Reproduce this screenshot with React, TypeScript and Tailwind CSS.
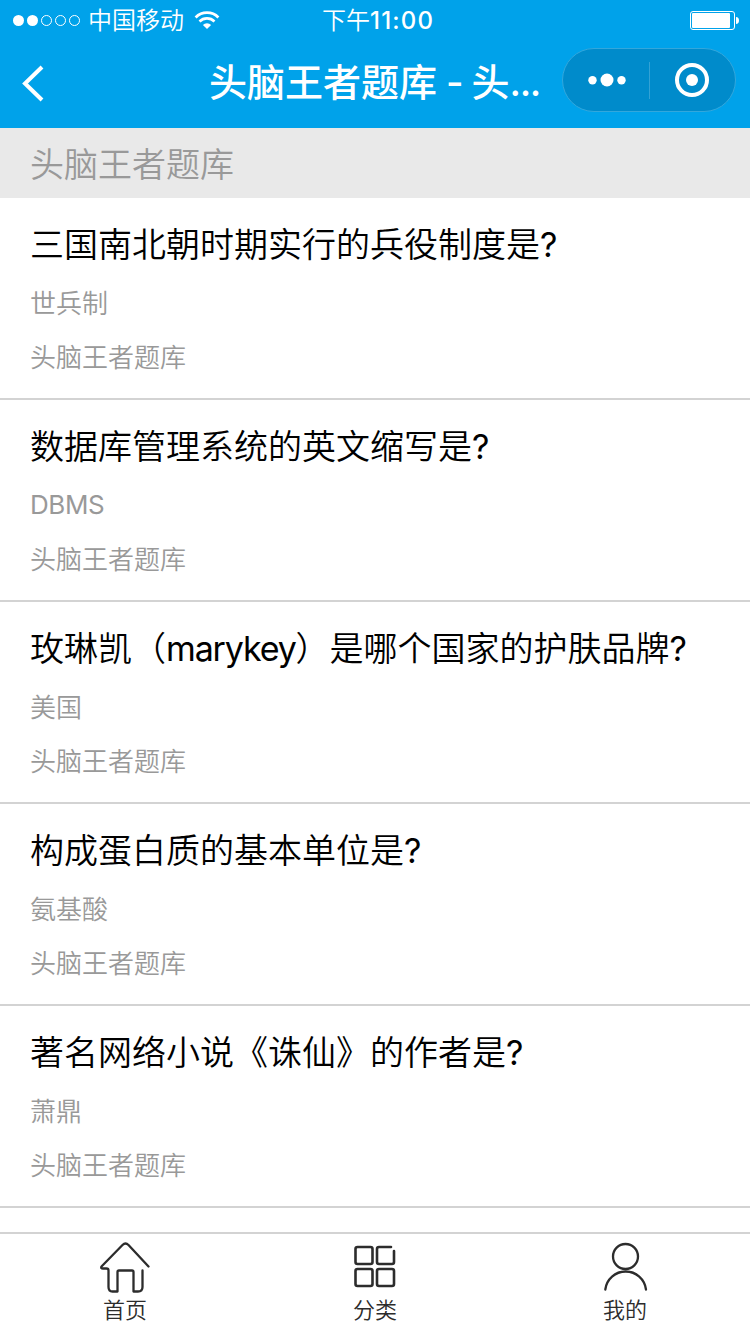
import type { ReactNode } from "react";

type Question = {
  title: string;
  answer: string;
  source: string;
};

const questions: Question[] = [
  { title: "三国南北朝时期实行的兵役制度是?", answer: "世兵制", source: "头脑王者题库" },
  { title: "数据库管理系统的英文缩写是?", answer: "DBMS", source: "头脑王者题库" },
  { title: "玫琳凯（marykey）是哪个国家的护肤品牌?", answer: "美国", source: "头脑王者题库" },
  { title: "构成蛋白质的基本单位是?", answer: "氨基酸", source: "头脑王者题库" },
  { title: "著名网络小说《诛仙》的作者是?", answer: "萧鼎", source: "头脑王者题库" },
];

function StatusBar() {
  return (
    <div className="grid h-10 grid-cols-3 items-center text-2xl leading-[38px]">
      <div className="flex items-center pl-[13px]">
        <svg width="68" height="12" viewBox="0 0 68 12" fill="none">
          <circle cx="5.5" cy="6.5" r="5.5" fill="white" />
          <circle cx="19.5" cy="6.5" r="5.5" fill="white" />
          <circle cx="33.5" cy="6.5" r="5" stroke="white" />
          <circle cx="47.5" cy="6.5" r="5" stroke="white" />
          <circle cx="61.5" cy="6.5" r="5" stroke="white" />
        </svg>
        <span className="ml-[7px] pt-0.5 font-[350]">中国移动</span>
        <svg className="ml-2.5" width="26" height="20" viewBox="0 0 26 20" fill="none">
          <path d="M1.6 7.4a16.2 16.2 0 0 1 22.8 0" stroke="white" strokeWidth="2.8" />
          <path d="M5.5 11.5a10.6 10.6 0 0 1 15 0" stroke="white" strokeWidth="2.6" />
          <path d="M8.9 15a5.8 5.8 0 0 1 8.2 0L13 19z" fill="white" />
        </svg>
      </div>
      <div className="pt-0.5 pl-[72px] whitespace-nowrap">
        <span className="font-[350]">下午</span>
        <span className="font-medium tracking-[1.2px]">11:00</span>
      </div>
      <div className="flex justify-end pr-[11px]">
        <svg width="49" height="20" viewBox="0 0 49 20" fill="none">
          <rect x="0.5" y="1.5" width="44" height="18" rx="2.5" stroke="white" />
          <rect x="2" y="3" width="38" height="15" rx="1" fill="white" />
          <path d="M46 7c2 0 3 1.5 3 3.5S48 14 46 14z" fill="white" />
        </svg>
      </div>
    </div>
  );
}

function NavBar() {
  return (
    <div className="flex h-[88px] items-start">
      <button className="w-[209px] pt-[25px] pl-[22px]">
        <svg width="22" height="37" viewBox="0 0 22 37" fill="none">
          <path d="M20 2L3 18.5L20 35" stroke="white" strokeWidth="4" />
        </svg>
      </button>
      <h1 className="w-[353px] text-[38px] leading-[84px] font-medium whitespace-nowrap">
        头脑王者题库<span className="tracking-[-1.1px]"> - </span>头
        <span className="tracking-[-1.4px]">...</span>
      </h1>
      <div className="mt-2 flex h-16 w-[174px] items-center rounded-full border border-[#33a7dc] bg-[#008bcb]">
        <button className="flex h-full w-[86px] items-center justify-center pl-0.5">
          <svg width="38" height="14" viewBox="0 0 38 14" fill="white">
            <circle cx="4.5" cy="7.3" r="4.2" />
            <circle cx="19" cy="7" r="6.5" />
            <circle cx="33.5" cy="7.3" r="4.2" />
          </svg>
        </button>
        <div className="h-[37px] w-px bg-[#33a2d5]" />
        <button className="flex h-full flex-1 items-center justify-center pr-0.5">
          <svg width="36" height="36" viewBox="0 0 36 36" fill="none">
            <circle cx="18" cy="18" r="15" stroke="white" strokeWidth="4" />
            <circle cx="18" cy="18" r="6" fill="white" />
          </svg>
        </button>
      </div>
    </div>
  );
}

// latin words inside a chinese title are set a bit tighter
function TitleText({ text }: { text: string }) {
  return text.split(/([a-z?]+)/).map((part, i) =>
    i % 2 ? (
      <span key={i} className="font-normal tracking-[-1.15px]">
        {part}
      </span>
    ) : (
      part
    )
  );
}

function QuestionItem({ title, answer, source }: Question) {
  const latin = /^[A-Z]+$/.test(answer);

  return (
    <li className="h-[202px] border-b-2 border-[#d3d3d3] px-[30px] pt-[23px]">
      <h2 className="text-[34px] leading-[48px] font-[350] whitespace-nowrap text-black">
        <TitleText text={title} />
      </h2>
      <p
        className={`mt-2 h-[54px] text-[26px] text-[#999] ${
          latin ? "leading-[52px] font-normal tracking-[-0.4px]" : "leading-[54px] font-[350]"
        }`}
      >
        {answer}
      </p>
      <p className="text-[26px] leading-[54px] font-[350] text-[#999]">{source}</p>
    </li>
  );
}

function Tab({ label, children }: { label: string; children: ReactNode }) {
  return (
    <button className="flex flex-1 flex-col items-center pt-[7px]">
      <svg
        width="52"
        height="52"
        viewBox="0 0 52 52"
        fill="none"
        stroke="#2c2c2c"
        strokeWidth="2.3"
        strokeLinecap="round"
        strokeLinejoin="round"
      >
        {children}
      </svg>
      <span className="mt-px text-[22px] leading-8 font-[350] text-[#2c2c2c]">{label}</span>
    </button>
  );
}

export default function App() {
  return (
    <main className="flex h-[1334px] w-[750px] flex-col overflow-hidden bg-white font-['Inter','Noto_Sans_CJK_SC',sans-serif]">
      <header className="h-32 bg-[#00a2ea] text-white">
        <StatusBar />
        <NavBar />
      </header>

      <div className="h-[70px] bg-[#e9e9e9] px-[30px] text-[34px] leading-[74px] font-[350] text-[#999]">
        头脑王者题库
      </div>

      <ul className="min-h-0 flex-1 overflow-hidden">
        {questions.map((q) => (
          <QuestionItem key={q.title} {...q} />
        ))}
      </ul>

      <nav className="flex h-[102px] border-t-2 border-[#d3d3d3] bg-white">
        <Tab label="首页">
          <path d="M49.5 25.5L29.5 4Q26.5 1 23.5 4L2.5 25.5Q1.5 27.5 4 27.5H7.5Q9.5 27.5 9.5 29.5V46Q9.5 50.5 13.5 50.5H18.5V31Q18.5 29.5 20 29.5H33Q34.5 29.5 34.5 31V50.5H39Q43.5 50.5 43.5 46V29.5" />
        </Tab>
        <Tab label="分类">
          <g strokeWidth="2.6">
            <rect x="6.5" y="6" width="17" height="17" rx="2" />
            <path d="M42 6H30Q28 6 28 8V21Q28 23 30 23H43Q45 23 45 21V10" />
            <rect x="6.5" y="28" width="17" height="17" rx="2" />
            <rect x="28" y="28" width="17" height="17" rx="2" />
          </g>
        </Tab>
        <Tab label="我的">
          <circle cx="26.5" cy="15.5" r="12.5" />
          <path d="M6.3 48.5A20.500 20.500 0 0 1 47 48.5" />
        </Tab>
      </nav>
    </main>
  );
}
